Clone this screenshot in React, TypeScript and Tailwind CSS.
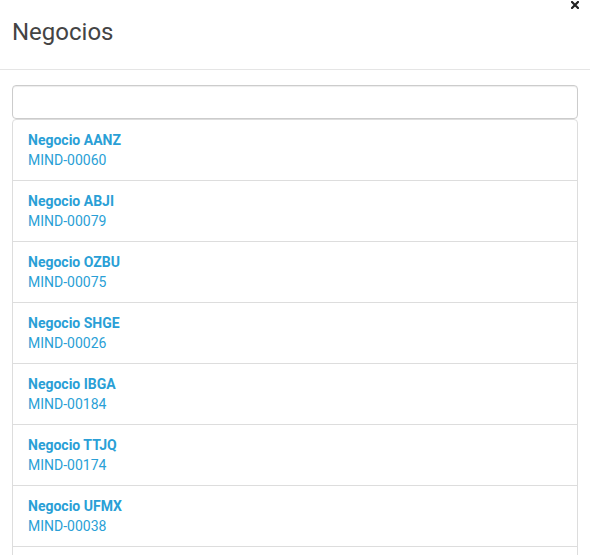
const ITEMS = [
  { name: "Negocio AANZ", code: "MIND-00060" },
  { name: "Negocio ABJI", code: "MIND-00079" },
  { name: "Negocio OZBU", code: "MIND-00075" },
  { name: "Negocio SHGE", code: "MIND-00026" },
  { name: "Negocio IBGA", code: "MIND-00184" },
  { name: "Negocio TTJQ", code: "MIND-00174" },
  { name: "Negocio UFMX", code: "MIND-00038" },
];

export default function App() {
  return (
    <div
      className="relative h-[555px] w-[590px] overflow-hidden bg-white"
      style={{ fontFamily: "Roboto, 'Liberation Sans', sans-serif" }}
    >
      {/* close */}
      <button className="absolute right-[10px] top-0 flex h-[10px] w-[10px] items-center justify-center">
        <svg width="8" height="8" viewBox="0 0 8 8">
          <path d="M1 1 L7 7 M7 1 L1 7" stroke="#222" strokeWidth="2.2" strokeLinecap="square" />
        </svg>
      </button>

      <div className="h-[70px] border-b border-[#e5e5e5] px-3 pt-[15px]">
        <h4 className="text-[24px] leading-[34px] text-[#444]">Negocios</h4>
      </div>

      <div className="px-3 pt-[15px]">
        <input
          type="text"
          className="block h-[34px] w-full rounded-[4px] border border-[#ccc] px-3 text-sm shadow-[inset_0_1px_1px_rgba(0,0,0,0.075)] outline-none"
        />
        <div className="flex flex-col">
          {ITEMS.map((it, i) => (
            <a
              key={it.code}
              className={`-mb-px block border border-[#ddd] px-[15px] py-[10px] text-[14px] leading-[20px] text-[#2a9fd6] ${
                i === 0 ? "rounded-t-[4px]" : ""
              }`}
            >
              <div className="font-bold">{it.name}</div>
              <div>{it.code}</div>
            </a>
          ))}
          {/* next row, cut by the viewport */}
          <div className="-mb-px h-[61px] border border-[#ddd]" />
        </div>
      </div>
    </div>
  );
}
